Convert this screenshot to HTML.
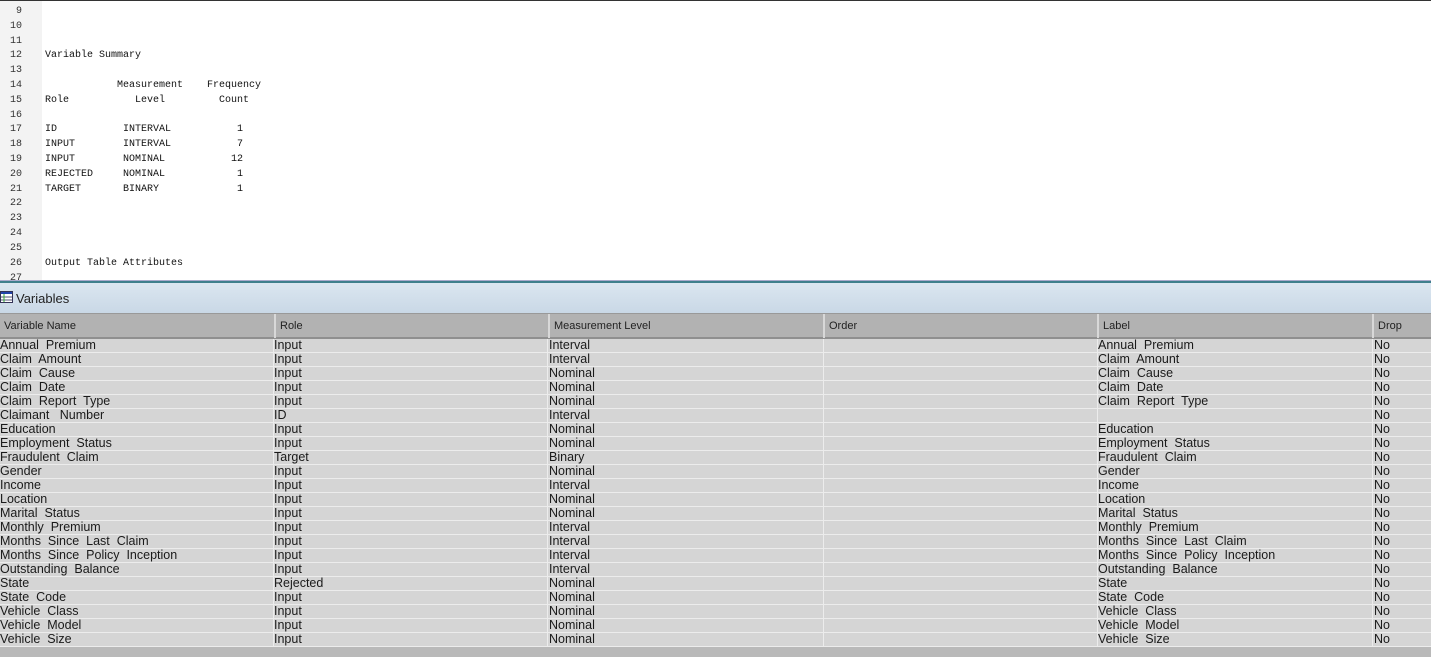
<!DOCTYPE html>
<html><head><meta charset="utf-8"><style>
*{margin:0;padding:0;box-sizing:border-box}
body{width:1431px;height:657px;overflow:hidden;background:#fff;position:relative;font-family:"Liberation Sans",sans-serif}
#top{position:absolute;left:0;top:0;width:1431px;height:281px;border-top:1px solid #333;background:#fff;overflow:hidden}
#gut{position:absolute;left:0;top:0;width:42px;height:281px;background:#f3f3f3}
.ln{position:absolute;left:0;width:42px;height:15px;font:10px "Liberation Mono",monospace;color:#333;white-space:pre;padding-left:10px;margin-top:3px}
.tx{position:absolute;left:45px;font:10px "Liberation Mono",monospace;color:#111;white-space:pre;margin-top:3px}
#teal{position:absolute;left:0;top:280px;width:1431px;height:3px;background:#3f7f8c;border-top:1px solid #aac}
#title{position:absolute;left:0;top:283px;width:1431px;height:30px;background:linear-gradient(#dbe6f0,#c9d8e6);font-size:13px;color:#222}
#title span{position:absolute;left:16px;top:8px}
#hdr{position:absolute;left:0;top:313px;width:1431px;height:26px;background:#b2b2b2;border-top:1px solid #999;border-bottom:2px solid #8f8f8f}
.hc{position:absolute;top:0;height:24px;font-size:11px;color:#222;padding:6px 0 0 4px;border-left:2px solid #d8d8d8}
#rows{position:absolute;left:0;top:339px;width:1431px}
.r{height:14px;background:#d5d5d5;border-bottom:1px solid #ececec;position:relative;font-size:12.5px;line-height:13px;color:#1a1a1a;white-space:pre}
.r span{position:absolute;top:0}
.cl{position:absolute;top:339px;width:1px;height:308px;background:#ececec}
#bot{position:absolute;left:0;top:647px;width:1431px;height:10px;background:#b9b9b9}
</style></head><body>
<div id="top"><div id="gut"></div>
<div class="ln" style="top:2px"> 9</div>
<div class="ln" style="top:17px">10</div>
<div class="ln" style="top:32px">11</div>
<div class="ln" style="top:46px">12</div><div class="tx" style="top:46px">Variable Summary</div>
<div class="ln" style="top:61px">13</div>
<div class="ln" style="top:76px">14</div><div class="tx" style="top:76px">            Measurement    Frequency</div>
<div class="ln" style="top:91px">15</div><div class="tx" style="top:91px">Role           Level         Count</div>
<div class="ln" style="top:106px">16</div>
<div class="ln" style="top:120px">17</div><div class="tx" style="top:120px">ID           INTERVAL           1</div>
<div class="ln" style="top:135px">18</div><div class="tx" style="top:135px">INPUT        INTERVAL           7</div>
<div class="ln" style="top:150px">19</div><div class="tx" style="top:150px">INPUT        NOMINAL           12</div>
<div class="ln" style="top:165px">20</div><div class="tx" style="top:165px">REJECTED     NOMINAL            1</div>
<div class="ln" style="top:180px">21</div><div class="tx" style="top:180px">TARGET       BINARY             1</div>
<div class="ln" style="top:194px">22</div>
<div class="ln" style="top:209px">23</div>
<div class="ln" style="top:224px">24</div>
<div class="ln" style="top:239px">25</div>
<div class="ln" style="top:254px">26</div><div class="tx" style="top:254px">Output Table Attributes</div>
<div class="ln" style="top:269px">27</div>
</div>
<div id="teal"></div>
<div id="title"><svg style="position:absolute;left:0;top:8px" width="13" height="12"><rect x="0.5" y="0.5" width="12" height="11" fill="#fff" stroke="#335"/><rect x="1" y="1" width="11" height="2" fill="#2244aa"/><line x1="1" y1="6" x2="12" y2="6" stroke="#557"/><line x1="1" y1="9" x2="12" y2="9" stroke="#557"/><line x1="4" y1="3" x2="4" y2="11" stroke="#3a3"/></svg><span>Variables</span></div>
<div id="hdr">
<div class="hc" style="left:0;border-left:none">Variable Name</div>
<div class="hc" style="left:274px">Role</div>
<div class="hc" style="left:548px">Measurement Level</div>
<div class="hc" style="left:823px">Order</div>
<div class="hc" style="left:1097px">Label</div>
<div class="hc" style="left:1372px">Drop</div>
</div>
<div id="rows">
<div class="r"><span style="left:0">Annual  Premium</span><span style="left:274px">Input</span><span style="left:549px">Interval</span><span style="left:1098px">Annual  Premium</span><span style="left:1374px">No</span></div>
<div class="r"><span style="left:0">Claim  Amount</span><span style="left:274px">Input</span><span style="left:549px">Interval</span><span style="left:1098px">Claim  Amount</span><span style="left:1374px">No</span></div>
<div class="r"><span style="left:0">Claim  Cause</span><span style="left:274px">Input</span><span style="left:549px">Nominal</span><span style="left:1098px">Claim  Cause</span><span style="left:1374px">No</span></div>
<div class="r"><span style="left:0">Claim  Date</span><span style="left:274px">Input</span><span style="left:549px">Nominal</span><span style="left:1098px">Claim  Date</span><span style="left:1374px">No</span></div>
<div class="r"><span style="left:0">Claim  Report  Type</span><span style="left:274px">Input</span><span style="left:549px">Nominal</span><span style="left:1098px">Claim  Report  Type</span><span style="left:1374px">No</span></div>
<div class="r"><span style="left:0">Claimant   Number</span><span style="left:274px">ID</span><span style="left:549px">Interval</span><span style="left:1374px">No</span></div>
<div class="r"><span style="left:0">Education</span><span style="left:274px">Input</span><span style="left:549px">Nominal</span><span style="left:1098px">Education</span><span style="left:1374px">No</span></div>
<div class="r"><span style="left:0">Employment  Status</span><span style="left:274px">Input</span><span style="left:549px">Nominal</span><span style="left:1098px">Employment  Status</span><span style="left:1374px">No</span></div>
<div class="r"><span style="left:0">Fraudulent  Claim</span><span style="left:274px">Target</span><span style="left:549px">Binary</span><span style="left:1098px">Fraudulent  Claim</span><span style="left:1374px">No</span></div>
<div class="r"><span style="left:0">Gender</span><span style="left:274px">Input</span><span style="left:549px">Nominal</span><span style="left:1098px">Gender</span><span style="left:1374px">No</span></div>
<div class="r"><span style="left:0">Income</span><span style="left:274px">Input</span><span style="left:549px">Interval</span><span style="left:1098px">Income</span><span style="left:1374px">No</span></div>
<div class="r"><span style="left:0">Location</span><span style="left:274px">Input</span><span style="left:549px">Nominal</span><span style="left:1098px">Location</span><span style="left:1374px">No</span></div>
<div class="r"><span style="left:0">Marital  Status</span><span style="left:274px">Input</span><span style="left:549px">Nominal</span><span style="left:1098px">Marital  Status</span><span style="left:1374px">No</span></div>
<div class="r"><span style="left:0">Monthly  Premium</span><span style="left:274px">Input</span><span style="left:549px">Interval</span><span style="left:1098px">Monthly  Premium</span><span style="left:1374px">No</span></div>
<div class="r"><span style="left:0">Months  Since  Last  Claim</span><span style="left:274px">Input</span><span style="left:549px">Interval</span><span style="left:1098px">Months  Since  Last  Claim</span><span style="left:1374px">No</span></div>
<div class="r"><span style="left:0">Months  Since  Policy  Inception</span><span style="left:274px">Input</span><span style="left:549px">Interval</span><span style="left:1098px">Months  Since  Policy  Inception</span><span style="left:1374px">No</span></div>
<div class="r"><span style="left:0">Outstanding  Balance</span><span style="left:274px">Input</span><span style="left:549px">Interval</span><span style="left:1098px">Outstanding  Balance</span><span style="left:1374px">No</span></div>
<div class="r"><span style="left:0">State</span><span style="left:274px">Rejected</span><span style="left:549px">Nominal</span><span style="left:1098px">State</span><span style="left:1374px">No</span></div>
<div class="r"><span style="left:0">State  Code</span><span style="left:274px">Input</span><span style="left:549px">Nominal</span><span style="left:1098px">State  Code</span><span style="left:1374px">No</span></div>
<div class="r"><span style="left:0">Vehicle  Class</span><span style="left:274px">Input</span><span style="left:549px">Nominal</span><span style="left:1098px">Vehicle  Class</span><span style="left:1374px">No</span></div>
<div class="r"><span style="left:0">Vehicle  Model</span><span style="left:274px">Input</span><span style="left:549px">Nominal</span><span style="left:1098px">Vehicle  Model</span><span style="left:1374px">No</span></div>
<div class="r"><span style="left:0">Vehicle  Size</span><span style="left:274px">Input</span><span style="left:549px">Nominal</span><span style="left:1098px">Vehicle  Size</span><span style="left:1374px">No</span></div>
</div>
<div class="cl" style="left:273px"></div><div class="cl" style="left:547px"></div><div class="cl" style="left:823px"></div><div class="cl" style="left:1097px"></div><div class="cl" style="left:1372px"></div>
<div id="bot"></div>
</body></html>
